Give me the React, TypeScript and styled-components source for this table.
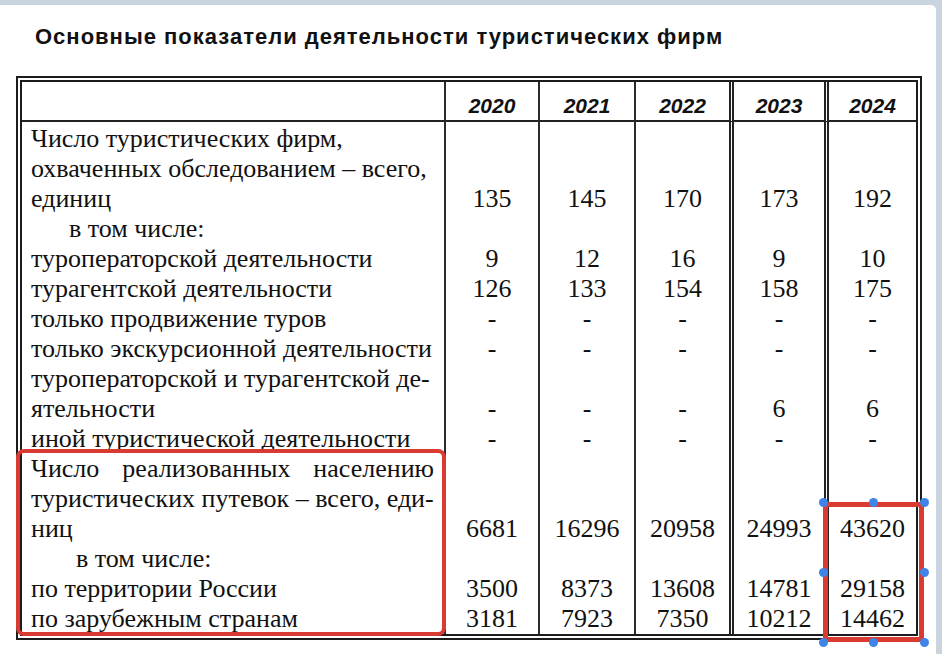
import React from "react";
import styled, { createGlobalStyle, css } from "styled-components";

const Global = createGlobalStyle`
  html, body { margin: 0; padding: 0; background: #c9d4df; }
  body { width: 942px; height: 654px; overflow: hidden; }
`;

const Sheet = styled.div`
  position: relative;
  margin: 5px 6px 0 0;
  height: 649px;
  background: #ffffff;
  border-top-right-radius: 5px;
  padding: 20px 0 0 16px;
  box-sizing: border-box;
`;

const Title = styled.h1`
  margin: 0 0 27px 19px;
  font: bold 22px/24px "Liberation Sans", Arial, sans-serif;
  letter-spacing: 1px;
  color: #111;
`;

const Table = styled.table`
  box-sizing: border-box;
  border-collapse: separate;
  border-spacing: 0;
  table-layout: fixed;
  width: 906px;
  border: 6px double #1c1c1c;
  font-family: "Liberation Serif", "Times New Roman", serif;
  color: #111;
`;

const Col = styled.col<{ $w: number }>`
  width: ${(p) => p.$w}px;
`;

type Edge = "none" | "single" | "double";

const edge = (e: Edge) =>
  e === "none" ? "none" : e === "double" ? "5px double #222" : "2px solid #2b2b2b";

const HeadCell = styled.th<{ $edge: Edge }>`
  padding: 10px 0 0;
  border-left: ${(p) => edge(p.$edge)};
  border-bottom: 2px solid #222;
  font: italic bold 21px/28px "Liberation Sans", Arial, sans-serif;
  text-align: center;
  color: #111;
`;

const LabelCell = styled.td<{ $pad?: boolean }>`
  padding: ${(p) => (p.$pad ? "2px" : "0")} 10px 0 9px;
  font-size: 26px;
  line-height: 30px;
  vertical-align: top;
`;

const ValueCell = styled.td<{ $edge: Edge }>`
  padding: 0;
  border-left: ${(p) => edge(p.$edge)};
  font-size: 26px;
  line-height: 30px;
  text-align: center;
  vertical-align: bottom;
`;

const Line = styled.div<{ $indent?: number; $justify?: boolean }>`
  white-space: nowrap;
  padding-left: ${(p) => p.$indent ?? 0}px;
  ${(p) =>
    p.$justify &&
    css`
      white-space: normal;
      text-align: justify;
      text-align-last: justify;
    `}
`;

const LabelHighlight = styled.div`
  position: absolute;
  left: 16px;
  top: 444px;
  width: 430px;
  height: 187px;
  box-sizing: border-box;
  border: 4.5px solid #d93b33;
  border-radius: 8px;
`;

const ValueHighlight = styled.div`
  position: absolute;
  left: 823px;
  top: 497px;
  width: 101px;
  height: 140px;
  box-sizing: border-box;
  border: 5px solid #d93b33;
  border-radius: 3px;
`;

const Handle = styled.span<{ $x: number; $y: number }>`
  position: absolute;
  left: ${(p) => p.$x - 4.5}px;
  top: ${(p) => p.$y - 4.5}px;
  width: 9px;
  height: 9px;
  border-radius: 50%;
  background: #3f84e8;
`;

type Row = {
  lines: { text: string; indent?: number; justify?: boolean }[];
  values?: string[];
};

const dash = ["-", "-", "-", "-", "-"];

const rows: Row[] = [
  {
    lines: [
      { text: "Число туристических фирм," },
      { text: "охваченных обследованием – всего," },
      { text: "единиц" },
    ],
    values: ["135", "145", "170", "173", "192"],
  },
  { lines: [{ text: "в том числе:", indent: 38 }] },
  { lines: [{ text: "туроператорской деятельности" }], values: ["9", "12", "16", "9", "10"] },
  { lines: [{ text: "турагентской деятельности" }], values: ["126", "133", "154", "158", "175"] },
  { lines: [{ text: "только продвижение туров" }], values: dash },
  { lines: [{ text: "только экскурсионной деятельности" }], values: dash },
  {
    lines: [{ text: "туроператорской и турагентской де-" }, { text: "ятельности" }],
    values: ["-", "-", "-", "6", "6"],
  },
  { lines: [{ text: "иной туристической деятельности" }], values: dash },
  {
    lines: [
      { text: "Число реализованных населению", justify: true },
      { text: "туристических путевок – всего, еди-" },
      { text: "ниц" },
    ],
    values: ["6681", "16296", "20958", "24993", "43620"],
  },
  { lines: [{ text: "в том числе:", indent: 45 }] },
  { lines: [{ text: "по территории России" }], values: ["3500", "8373", "13608", "14781", "29158"] },
  { lines: [{ text: "по зарубежным странам" }], values: ["3181", "7923", "7350", "10212", "14462"] },
];

const years = ["2020", "2021", "2022", "2023", "2024"];
const edges: Edge[] = ["single", "single", "single", "double", "double"];
const widths = [422, 94, 96, 95, 95, 92];

const handles: [number, number][] = [
  [823, 497],
  [873, 497],
  [924, 497],
  [823, 567],
  [924, 567],
  [823, 637],
  [873, 637],
  [924, 637],
];

export default function App() {
  return (
    <>
      <Global />
      <Sheet>
        <Title>Основные показатели деятельности туристических фирм</Title>
        <Table>
          <colgroup>
            {widths.map((w, i) => (
              <Col key={i} $w={w} />
            ))}
          </colgroup>
          <thead>
            <tr>
              <HeadCell $edge="none" />
              {years.map((y, i) => (
                <HeadCell key={y} $edge={edges[i]}>
                  {y}
                </HeadCell>
              ))}
            </tr>
          </thead>
          <tbody>
            {rows.map((r, ri) => (
              <tr key={ri}>
                <LabelCell $pad={ri === 0}>
                  {r.lines.map((l, li) => (
                    <Line key={li} $indent={l.indent} $justify={l.justify}>
                      {l.text}
                    </Line>
                  ))}
                </LabelCell>
                {edges.map((e, ci) => (
                  <ValueCell key={ci} $edge={e}>
                    {r.values ? r.values[ci] : ""}
                  </ValueCell>
                ))}
              </tr>
            ))}
          </tbody>
        </Table>
        <LabelHighlight />
        <ValueHighlight />
        {handles.map(([x, y], i) => (
          <Handle key={i} $x={x} $y={y} />
        ))}
      </Sheet>
    </>
  );
}
